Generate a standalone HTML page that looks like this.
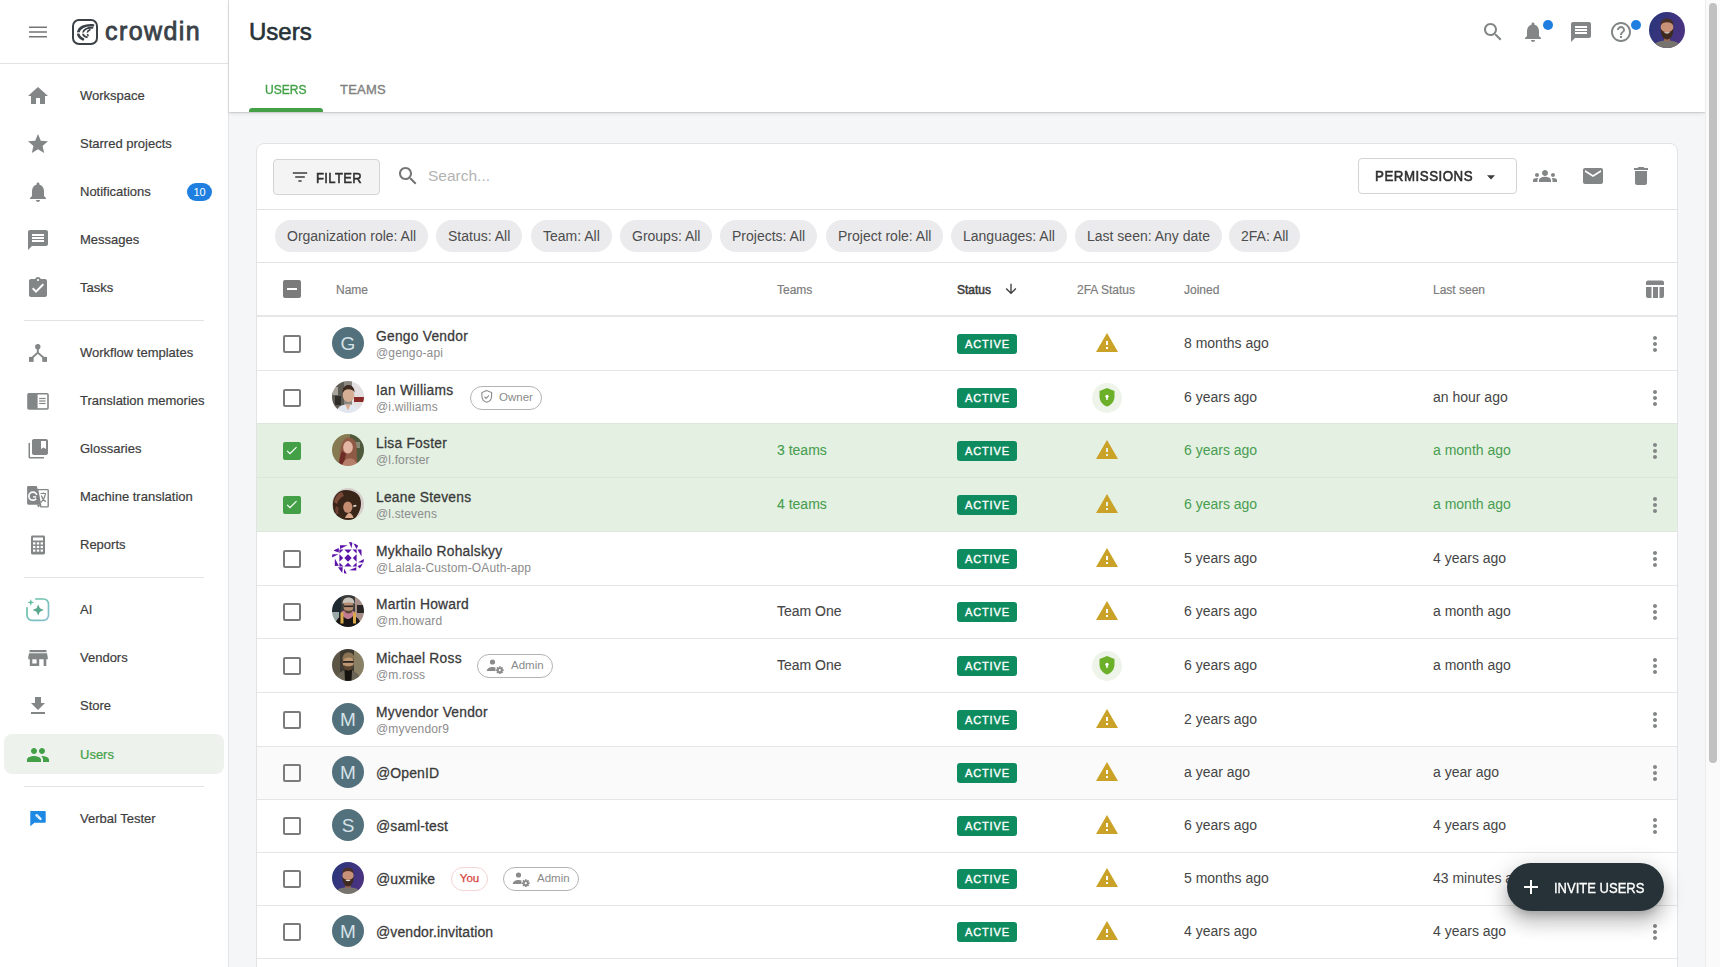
<!DOCTYPE html>
<html><head><meta charset="utf-8">
<style>
*{box-sizing:border-box;margin:0;padding:0}
html,body{width:1720px;height:967px;overflow:hidden}
body{position:relative;background:#f5f6f8;font-family:"Liberation Sans",sans-serif;color:#3c3c3c}
.abs{position:absolute}
svg{display:block}
#side{position:absolute;left:0;top:0;width:229px;height:967px;background:#fff;border-right:1px solid #e3e3e3}
#side .hdr{position:absolute;left:0;top:0;width:228px;height:64px;border-bottom:1px solid #e3e3e3}
.nav{position:absolute;left:4px;width:220px;height:40px;border-radius:8px}
.nav svg{position:absolute;left:22px;top:9px;width:24px;height:24px;fill:#838686}
.nav span{position:absolute;left:76px;top:13px;font-size:13px;line-height:16px;color:#3d3d3d;-webkit-text-stroke:0.2px #3d3d3d;white-space:nowrap}
.nav.act{background:#edf2ec}
.nav.act span{color:#43a047;-webkit-text-stroke:0.2px #43a047}
.nav.act svg{fill:#43a047}
.div{position:absolute;left:24px;width:180px;height:1px;background:#e3e3e3}
.badge{position:absolute;left:183px;top:12px;width:25px;height:18px;border-radius:9px;background:#1e7fe0;color:#fff;font-size:11px;line-height:18px;text-align:center}
#top{position:absolute;left:229px;top:0;width:1476px;height:112px;background:#fff;box-shadow:0 1px 1px rgba(0,0,0,.10),0 2px 4px rgba(0,0,0,.08)}
#sb{position:absolute;left:1705px;top:0;width:15px;height:967px;background:#fafafa;border-left:1px solid #ececec}
#sb i{position:absolute;left:3px;top:3px;width:8px;height:760px;border-radius:4px;background:#c1c1c1}
.ico{position:absolute;width:24px;height:24px;fill:#838686}
.dot{position:absolute;width:10px;height:10px;border-radius:5px;background:#1e7fe0}


#card{position:absolute;left:256px;top:143px;width:1422px;height:860px;background:#fff;border:1px solid #e2e3e4;border-radius:8px;overflow:hidden}
.tb{position:absolute;left:0;top:0;width:100%;height:66px;border-bottom:1px solid #e3e3e3}
.btn{position:absolute;border:1px solid #d4d4d4;border-radius:4px}
.chips{position:absolute;left:0;top:66px;width:100%;height:53px;border-bottom:1px solid #e3e3e3}
.chip{position:absolute;top:10px;height:32px;border-radius:16px;background:#ebebed;font-size:14px;line-height:32px;color:#4d4d4d;padding:0 12px;white-space:nowrap}
.th{position:absolute;left:0;top:119px;width:100%;height:54px;border-bottom:2px solid #e6e6e6}
.th span{position:absolute;top:20px;font-size:12px;line-height:14px;color:#7d7d7d;white-space:nowrap;-webkit-text-stroke:0.2px #7d7d7d}
.row{position:absolute;left:0;width:100%;height:53.42px}
.row.sel{background:#e3f0e2}
.sep{position:absolute;left:0;width:100%;height:1px;background:#e6e6e6}
.row.hov{background:#fafafa}
.cb{position:absolute;left:26px;width:18px;height:18px;border:2px solid #7b7b7b;border-radius:2px}
.cb.on{background:#43a047;border-color:#43a047}
.av svg{filter:blur(0.35px)}
.av{position:absolute;left:75px;width:32px;height:32px;border-radius:50%;overflow:hidden;background:#53717c;color:#d5e2e8;font-size:19px;line-height:34px;text-align:center}
.nm{position:absolute;left:119px;font-size:13.8px;letter-spacing:0.25px;color:#3a3a3a;line-height:16px;white-space:nowrap;-webkit-text-stroke:0.28px #3a3a3a}
.un{position:absolute;left:119px;font-size:12px;letter-spacing:0.15px;color:#8c8c8c;line-height:14px;white-space:nowrap}
.tag{position:absolute;height:24px;border:1px solid #b3b3b3;border-radius:12px;font-size:11.5px;line-height:20.5px;color:#8a8a8a;white-space:nowrap}
.txt{position:absolute;font-size:14px;line-height:16px;color:#454545;white-space:nowrap}
.sel .txt{color:#489d50}
.tm{-webkit-text-stroke:0.1px currentColor}
.stb{position:absolute;left:700px;width:60px;height:20px;border-radius:3px;background:#0f8c5f;color:#fff;font-size:11px;line-height:20px;text-align:center;letter-spacing:0.9px;padding-left:1px;-webkit-text-stroke:0.35px #fff}
.mv{position:absolute;left:1386px;width:24px;height:24px;fill:#838686}
.w2{position:absolute;left:838px;width:24px;height:24px}
#fab{position:absolute;left:1507px;top:863px;width:157px;height:48px;border-radius:24px;background:#263238;box-shadow:0 7px 8px -4px rgba(0,0,0,.2),0 12px 17px 2px rgba(0,0,0,.14),0 5px 22px 4px rgba(0,0,0,.12)}

</style></head><body>

<div id="side">
  <div class="hdr">
    <svg class="abs" style="left:26px;top:20px" width="24" height="24" viewBox="0 0 24 24"><path fill="#757575" d="M3 17.5h18v-1.6H3v1.6zm0-4.7h18v-1.6H3v1.6zM3 6.5v1.6h18V6.5H3z"/></svg>
    <div class="abs" style="left:72px;top:19px;width:26px;height:26px;border:2px solid #3a4147;border-radius:7px"></div>
    <svg class="abs" style="left:68px;top:15px" width="34" height="34" viewBox="0 0 34 34"><g fill="none" stroke="#3a4147" stroke-linecap="round"><path stroke-width="2.6" d="M25 10.3C17 9.6 11 12.5 10.2 17.5C10 20.5 12 23 15 24.3"/><path stroke-width="1.9" d="M24.5 12.8C20 12.5 15.8 14.2 15 17.6C14.8 19.8 16.2 21.4 18.8 22.2"/><path stroke-width="1.6" d="M22 14.8C20.5 15.4 19.6 16.4 19.3 17.6"/><path stroke-width="1.6" d="M19.6 19.2L20 20.6"/></g><path stroke="#fff" stroke-width="1.3" d="M8 17.9L23 18.3"/></svg>
    <div class="abs" style="left:105px;top:16px;font-size:25px;color:#3a4147;line-height:30px;letter-spacing:1.4px;-webkit-text-stroke:0.8px #3a4147">crowdin</div>
  </div>

  <div class="nav" style="top:75px"><svg viewBox="0 0 24 24"><path d="M10 20v-6h4v6h5v-8h3L12 3 2 12h3v8z"/></svg><span>Workspace</span></div>
  <div class="nav" style="top:123px"><svg viewBox="0 0 24 24"><path d="M12 17.27L18.18 21l-1.64-7.03L22 9.24l-7.19-.61L12 2 9.19 8.63 2 9.24l5.46 4.73L5.82 21z"/></svg><span>Starred projects</span></div>
  <div class="nav" style="top:171px"><svg viewBox="0 0 24 24"><path d="M12 22c1.1 0 2-.9 2-2h-4c0 1.1.89 2 2 2zm6-6v-5c0-3.07-1.64-5.64-4.5-6.32V4c0-.83-.67-1.5-1.5-1.5s-1.5.67-1.5 1.5v.68C7.63 5.36 6 7.92 6 11v5l-2 2v1h16v-1l-2-2z"/></svg><span>Notifications</span><div class="badge">10</div></div>
  <div class="nav" style="top:219px"><svg viewBox="0 0 24 24"><path d="M20 2H4c-1.1 0-1.99.9-1.99 2L2 22l4-4h14c1.1 0 2-.9 2-2V4c0-1.1-.9-2-2-2zm-2 12H6v-2h12v2zm0-3H6V9h12v2zm0-3H6V6h12v2z"/></svg><span>Messages</span></div>
  <div class="nav" style="top:267px"><svg viewBox="0 0 24 24"><path d="M19 3h-4.18C14.4 1.84 13.3 1 12 1c-1.3 0-2.4.84-2.82 2H5c-1.1 0-2 .9-2 2v14c0 1.1.9 2 2 2h14c1.1 0 2-.9 2-2V5c0-1.1-.9-2-2-2zm-7 0c.55 0 1 .45 1 1s-.45 1-1 1-1-.45-1-1 .45-1 1-1zm-2 14l-4-4 1.41-1.41L10 14.17l6.59-6.59L18 9l-8 8z"/></svg><span>Tasks</span></div>
  <div class="div" style="top:320px"></div>
  <div class="nav" style="top:332px"><svg viewBox="0 0 24 24"><circle cx="11.8" cy="5.7" r="2.7"/><rect x="3" y="15.9" width="4.6" height="5"/><rect x="16.3" y="15.9" width="4.7" height="5"/><path d="M11.8 8v3.6L5.3 17.5M11.8 11.6l6.7 5.9" fill="none" stroke="#838686" stroke-width="1.9"/></svg><span>Workflow templates</span></div>
  <div class="nav" style="top:380px"><svg viewBox="0 0 24 24"><path d="M3 3.9h18a1.8 1.8 0 0 1 1.8 1.8v13.3a1.8 1.8 0 0 1-1.8 1.8H3a1.8 1.8 0 0 1-1.8-1.8V5.7A1.8 1.8 0 0 1 3 3.9z"/><rect x="11.6" y="5.5" width="9.6" height="13.7" fill="#fff"/><rect x="13.2" y="8.9" width="6.4" height="1.2"/><rect x="13.2" y="11.4" width="6.4" height="1.2"/><rect x="13.2" y="13.9" width="6.4" height="1.2"/></svg><span>Translation memories</span></div>
  <div class="nav" style="top:428px"><svg viewBox="0 0 24 24"><path d="M4 6H2.5v14c0 .8.7 1.5 1.5 1.5h14V20H4V6zm16-4H8c-1.1 0-2 .9-2 2v12c0 1.1.9 2 2 2h12c1.1 0 2-.9 2-2V4c0-1.1-.9-2-2-2zm0 10l-2.5-1.5L15 12V4h5v8z"/></svg><span>Glossaries</span></div>
  <div class="nav" style="top:476px"><svg viewBox="0 0 24 24"><path d="M2.3 1.1h7.6c.7 0 1.1.5 1.3 1.1l4.5 17.5H2.3c-.7 0-1.2-.5-1.2-1.2V2.3c0-.7.5-1.2 1.2-1.2z"/><path d="M11.6 4.6h9.9c.5 0 .7.3.7.7v15.9c0 .5-.3.7-.7.7h-6.6z" fill="#fff" stroke="#838686" stroke-width="1.4"/><path d="M11 19.7h4l-2.8 2.8z"/><circle cx="6.9" cy="11.2" r="4" fill="none" stroke="#fff" stroke-width="1.7"/><path d="M7 11.2h4v1.4H7z" fill="#fff"/><rect x="10.2" y="10" width="2" height="4" fill="#7b7b7b"/><path d="M14.5 8.5h5.5M17.2 7.4v1.2M15.3 10.5c1 3 2.5 5 4.6 6.1M19.4 9c-.8 4-2.3 6.5-4.6 8.5" fill="none" stroke="#838686" stroke-width="1.2"/></svg><span>Machine translation</span></div>
  <div class="nav" style="top:524px"><svg viewBox="0 0 24 24"><path d="M6.5 2.5h11c.9 0 1.5.7 1.5 1.5v16c0 .8-.6 1.5-1.5 1.5h-11c-.9 0-1.5-.7-1.5-1.5V4c0-.8.6-1.5 1.5-1.5z"/><g fill="#fff"><rect x="7" y="4.5" width="10" height="3"/><rect x="7" y="9.3" width="2.4" height="2.2"/><rect x="10.8" y="9.3" width="2.4" height="2.2"/><rect x="14.6" y="9.3" width="2.4" height="2.2"/><rect x="7" y="12.9" width="2.4" height="2.2"/><rect x="10.8" y="12.9" width="2.4" height="2.2"/><rect x="14.6" y="12.9" width="2.4" height="2.2"/><rect x="7" y="16.5" width="2.4" height="2.2"/><rect x="10.8" y="16.5" width="2.4" height="2.2"/><rect x="14.6" y="16.5" width="2.4" height="2.2"/></g></svg><span>Reports</span></div>
  <div class="div" style="top:577px"></div>
  <div class="nav" style="top:589px"><svg viewBox="0 0 24 24"><defs><linearGradient id="aig" x1="0" y1="0" x2="1" y2="1"><stop offset="0" stop-color="#5cc39f"/><stop offset="1" stop-color="#8cbfd0"/></linearGradient></defs><path d="M9.2 1h8.3a5 5 0 0 1 5 5v11.3a5 5 0 0 1-5 5H6a5 5 0 0 1-5-5V9.3" fill="none" stroke="url(#aig)" stroke-width="1.7"/><path d="M4.8 1l.9 2.5 2.6.9-2.6.9-.9 2.6-.9-2.6-2.6-.9 2.6-.9z" fill="#62c09f"/><path d="M12.2 6.4l1.7 3.9 3.9 1.7-3.9 1.7-1.7 3.9-1.7-3.9-3.9-1.7 3.9-1.7z" fill="#5aa88e"/></svg><span>AI</span></div>
  <div class="nav" style="top:637px"><svg viewBox="0 0 24 24"><path d="M3.5 4h17v2.2h-17zM3 7.3h18l.8 4.2v1.8H20.3V20H17.6v-6.7h-4.4V20H3.8v-6.7H2.2v-1.8z"/><rect x="6.3" y="13.3" width="4.3" height="4.2" fill="#fff"/></svg><span>Vendors</span></div>
  <div class="nav" style="top:685px"><svg viewBox="0 0 24 24"><path d="M19 9h-4V3H9v6H5l7 7 7-7zM5 18v2h14v-2H5z"/></svg><span>Store</span></div>
  <div class="nav act" style="top:734px"><svg viewBox="0 0 24 24"><path d="M16 11c1.66 0 2.99-1.34 2.99-3S17.66 5 16 5c-1.66 0-3 1.34-3 3s1.34 3 3 3zm-8 0c1.66 0 2.99-1.34 2.99-3S9.66 5 8 5C6.34 5 5 6.34 5 8s1.34 3 3 3zm0 2c-2.33 0-7 1.17-7 3.5V19h14v-2.5c0-2.33-4.67-3.5-7-3.5zm8 0c-.29 0-.62.02-.97.05 1.16.84 1.97 1.97 1.97 3.45V19h6v-2.5c0-2.33-4.67-3.5-7-3.5z"/></svg><span>Users</span></div>
  <div class="div" style="top:786px"></div>
  <div class="nav" style="top:798px"><svg viewBox="0 0 24 24"><path d="M4.8 4.1h14.2c.4 0 .7.3.7.7v10.2c0 .4-.3.7-.7.7H8.4l-4.1 3.6V4.8c0-.4.2-.7.5-.7z" fill="#1e88e5"/><path d="M10.6 8.3L14.4 11.9" stroke="#e8f3fc" stroke-width="2.6" stroke-linecap="round"/><path d="M11.2 8.9L11.9 9.5" stroke="#1e88e5" stroke-width="0.7"/></svg><span>Verbal Tester</span></div>
</div>

<div id="top">
  <div class="abs" style="left:20px;top:18px;font-size:24px;line-height:28px;color:#263238;-webkit-text-stroke:0.6px #263238">Users</div>
  <div class="abs" style="left:36px;top:83px;font-size:12.5px;line-height:14px;color:#43a047;letter-spacing:0px;-webkit-text-stroke:0.35px #43a047;transform:scaleX(0.965);transform-origin:0 0">USERS</div>
  <div class="abs" style="left:111px;top:83px;font-size:13px;line-height:14px;color:#808080;letter-spacing:0.2px;-webkit-text-stroke:0.35px #808080">TEAMS</div>
  <div class="abs" style="left:20px;top:108px;width:74px;height:4px;background:#43a047;border-radius:3px 3px 0 0"></div>
  <svg class="ico" style="left:1252px;top:20px" viewBox="0 0 24 24"><path d="M15.5 14h-.79l-.28-.27C15.41 12.59 16 11.11 16 9.5 16 5.91 13.09 3 9.5 3S3 5.91 3 9.5 5.91 16 9.5 16c1.61 0 3.09-.59 4.230-1.57l.27.28v.79l5 4.99L20.490 19l-4.99-5zm-6 0C7.01 14 5 11.99 5 9.5S7.01 5 9.5 5 14 7.01 14 9.5 11.99 14 9.5 14z"/></svg>
  <svg class="ico" style="left:1292px;top:20px" viewBox="0 0 24 24"><path d="M12 22c1.1 0 2-.9 2-2h-4c0 1.1.89 2 2 2zm6-6v-5c0-3.07-1.64-5.640-4.5-6.32V4c0-.83-.67-1.5-1.5-1.5s-1.5.67-1.5 1.5v.68C7.63 5.36 6 7.92 6 11v5l-2 2v1h16v-1l-2-2z"/></svg>
  <div class="dot" style="left:1314px;top:20px"></div>
  <svg class="ico" style="left:1340px;top:20px" viewBox="0 0 24 24"><path d="M20 2H4c-1.1 0-1.99.9-1.99 2L2 22l4-4h14c1.1 0 2-.9 2-2V4c0-1.1-.9-2-2-2zm-2 12H6v-2h12v2zm0-3H6V9h12v2zm0-3H6V6h12v2z"/></svg>
  <svg class="ico" style="left:1380px;top:20px" viewBox="0 0 24 24"><path d="M11 18h2v-2h-2v2zm1-16C6.48 2 2 6.48 2 12s4.48 10 10 10 10-4.48 10-10S17.52 2 12 2zm0 18c-4.41 0-8-3.59-8-8s3.59-8 8-8 8 3.59 8 8-3.59 8-8 8zm0-14c-2.21 0-4 1.79-4 4h2c0-1.1.9-2 2-2s2 .9 2 2c0 2-3 1.75-3 5h2c0-2.25 3-2.5 3-5 0-2.210-1.79-4-4-4z"/></svg>
  <div class="dot" style="left:1402px;top:20px"></div>
  <svg class="abs" style="left:1420px;top:12px" width="36" height="36" viewBox="0 0 36 36"><defs><linearGradient id="mk" x1="0" y1="0" x2="1" y2="0.4"><stop offset="0" stop-color="#26367a"/><stop offset="1" stop-color="#4a3381"/></linearGradient><clipPath id="mkc"><circle cx="18" cy="18" r="18"/></clipPath></defs><g clip-path="url(#mkc)"><rect width="36" height="36" fill="url(#mk)"/><path d="M2 37C4 31 10 28.5 18 28.5S32 31 34 37z" fill="#77736e"/><rect x="15" y="22" width="6" height="7" fill="#9a6a55"/><ellipse cx="18" cy="15.5" rx="6.3" ry="7.6" fill="#c99278"/><path d="M11.6 13.5C11.4 8.5 14 6.5 18 6.5S24.6 8.5 24.4 13.5C23 11 21 10.2 18 10.2S13 11 11.6 13.5z" fill="#4a3028"/><path d="M11.6 16C11.6 24 14.5 27.5 18 27.5S24.4 24 24.4 16C23.2 19 21 20.2 18 20.2S12.8 19 11.6 16z" fill="#3f2a21"/><path d="M15 20.3C16 21.3 17 21.6 18 21.6S20 21.3 21 20.3z" fill="#eee4de"/></g></svg>
</div>

<div id="card">
  <div class="tb">
    <div class="btn" style="left:16px;top:15px;width:107px;height:36px;background:#f4f4f4">
      <svg class="abs" style="left:13.5px;top:5px" width="24" height="24" viewBox="0 0 24 24"><path fill="#3c3c3c" d="M10 18h4v-2h-4v2zM3 6v2h18V6H3zm3 7h12v-2H6v2z" transform="translate(2.4,2.4) scale(0.8)"/></svg>
      <div class="abs" style="left:42px;top:10px;font-size:14px;color:#2f2f2f;letter-spacing:0.4px;line-height:16px;-webkit-text-stroke:0.55px #2f2f2f;transform:scaleX(0.93);transform-origin:0 0">FILTER</div>
    </div>
    <svg class="abs" style="left:139px;top:20px" width="24" height="24" viewBox="0 0 24 24"><path fill="#757575" d="M15.5 14h-.79l-.28-.27C15.41 12.59 16 11.11 16 9.5 16 5.91 13.09 3 9.5 3S3 5.91 3 9.5 5.91 16 9.5 16c1.61 0 3.09-.59 4.23-1.57l.27.28v.79l5 4.99L20.49 19l-4.99-5zm-6 0C7.01 14 5 11.99 5 9.5S7.01 5 9.5 5 14 7.01 14 9.5 11.99 14 9.5 14z"/></svg>
    <div class="abs" style="left:171px;top:23px;font-size:15.5px;color:#b3b3b3;line-height:18px">Search...</div>
    <div class="btn" style="left:1101px;top:14px;width:159px;height:36px;background:#fff">
      <div class="abs" style="left:16px;top:9px;font-size:14px;color:#2f2f2f;letter-spacing:0.55px;line-height:16px;-webkit-text-stroke:0.55px #2f2f2f;transform:scaleX(0.95);transform-origin:0 0">PERMISSIONS</div>
      <svg class="abs" style="left:120px;top:6px" width="24" height="24" viewBox="0 0 24 24"><path fill="#3c3c3c" d="M8 10.2l4 4.3 4-4.3z"/></svg>
    </div>
    <svg class="abs" style="left:1276px;top:20px" width="24" height="24" viewBox="0 0 24 24"><path fill="#838686" d="M12 12.75c1.63 0 3.07.39 4.24.9 1.08.48 1.76 1.56 1.76 2.73V18H6v-1.61c0-1.18.68-2.26 1.76-2.73 1.17-.52 2.61-.91 4.24-.91zM4 13c1.1 0 2-.9 2-2s-.9-2-2-2-2 .9-2 2 .9 2 2 2zm1.130 1.1c-.37-.06-.74-.1-1.13-.1-.99 0-1.93.21-2.78.58C.48 14.9 0 15.62 0 16.43V18h4.5v-1.61c0-.83.23-1.61.63-2.29zM20 13c1.1 0 2-.9 2-2s-.9-2-2-2-2 .9-2 2 .9 2 2 2zm4 3.43c0-.81-.48-1.53-1.22-1.85-.85-.37-1.79-.58-2.78-.58-.39 0-.76.04-1.13.1.4.68.63 1.46.63 2.29V18H24v-1.57zM12 6c1.66 0 3 1.34 3 3s-1.34 3-3 3-3-1.34-3-3 1.34-3 3-3z"/></svg>
    <svg class="abs" style="left:1324px;top:20px" width="24" height="24" viewBox="0 0 24 24"><path fill="#838686" d="M20 4H4c-1.1 0-1.99.9-1.99 2L2 18c0 1.1.9 2 2 2h16c1.1 0 2-.9 2-2V6c0-1.1-.9-2-2-2zm0 4l-8 5-8-5V6l8 5 8-5v2z"/></svg>
    <svg class="abs" style="left:1372px;top:20px" width="24" height="24" viewBox="0 0 24 24"><path fill="#838686" d="M6 19c0 1.1.9 2 2 2h8c1.1 0 2-.9 2-2V7H6v12zM19 4h-3.5l-1-1h-5l-1 1H5v2h14V4z"/></svg>
  </div>
  <div class="chips">
    <div class="chip" style="left:18px">Organization role: All</div>
    <div class="chip" style="left:179px">Status: All</div>
    <div class="chip" style="left:274px">Team: All</div>
    <div class="chip" style="left:363px">Groups: All</div>
    <div class="chip" style="left:463px">Projects: All</div>
    <div class="chip" style="left:569px">Project role: All</div>
    <div class="chip" style="left:694px">Languages: All</div>
    <div class="chip" style="left:818px">Last seen: Any date</div>
    <div class="chip" style="left:972px">2FA: All</div>
  </div>
  <div class="th">
    <div class="cb" style="top:17px;background:#7b7b7b;border-color:#7b7b7b"><div class="abs" style="left:2px;top:6px;width:10px;height:2px;background:#fff"></div></div>
    <span style="left:79px">Name</span>
    <span style="left:520px">Teams</span>
    <span style="left:700px;color:#3c3c3c;-webkit-text-stroke:0.5px #3c3c3c">Status</span>
    <svg class="abs" style="left:746px;top:18px" width="16" height="16" viewBox="0 0 24 24"><path fill="#3c3c3c" d="M20 12l-1.41-1.41L13 16.17V4h-2v12.17l-5.58-5.59L4 12l8 8 8-8z"/></svg>
    <span style="left:820px">2FA Status</span>
    <span style="left:927px">Joined</span>
    <span style="left:1176px">Last seen</span>
    <svg class="abs" style="left:1388px;top:17px" width="20" height="20" viewBox="0 0 20 20"><path fill="#838686" d="M1 2.6a2 2 0 0 1 2-2h14a2 2 0 0 1 2 2V5H1zM1 7h5.5v11H3a2 2 0 0 1-2-2zM8 7h5v11H8zM14.5 7H19v9a2 2 0 0 1-2 2h-2.5z"/></svg>
  </div>
  <div class="row" style="top:173px;height:54px"><div class="cb" style="top:18.00px"></div><div class="av" style="top:10.00px">G</div><div class="nm" style="top:11.50px">Gengo Vendor</div><div class="un" style="top:29.00px">@gengo-api</div><div class="stb" style="top:17.00px">ACTIVE</div><svg class="w2" style="top:14.00px" viewBox="0 0 24 24"><path fill="#c9a227" d="M1 21h22L12 2 1 21zm12-3h-2v-2h2v2zm0-4h-2v-4h2v4z"/></svg><div class="txt" style="left:927px;top:18.30px">8 months ago</div><svg class="mv" style="top:15.00px" viewBox="0 0 24 24"><path d="M12 8c1.1 0 2-.9 2-2s-.9-2-2-2-2 .9-2 2 .9 2 2 2zm0 2c-1.1 0-2 .9-2 2s.9 2 2 2 2-.9 2-2-.9-2-2-2zm0 6c-1.1 0-2 .9-2 2s.9 2 2 2 2-.9 2-2-.9-2-2-2z"/></svg></div><div class="row" style="top:227px;height:53px"><div class="cb" style="top:18.00px"></div><div class="av" style="top:10.00px;background:none"><svg width="32" height="32" viewBox="0 0 32 32" style="position:absolute;left:0;top:0"><rect width="32" height="32" fill="#8a8680"/><rect x="0" y="0" width="12" height="32" fill="#5e5a54"/><rect x="1" y="6" width="5" height="8" fill="#a8a49c"/><rect x="3" y="15" width="6" height="9" fill="#2e2c28"/><rect x="20" y="0" width="12" height="32" fill="#e4e0e2"/><rect x="22" y="16" width="10" height="5" fill="#8a2a26"/><path d="M4 32c1-6 5-8.5 12-8.5s11 2.5 12 8.5z" fill="#e2e6ee"/><path d="M13.5 23.5l2.5 6 2.5-6z" fill="#d8aa90"/><ellipse cx="16.5" cy="14" rx="5.8" ry="7" fill="#d6ae94"/><path d="M10.5 12c-.2-5.5 2.8-8 6-8s6.2 2.5 6 7.5c-1.2-2-3-3.2-6-3.2s-4.8 1.5-6 3.7z" fill="#3d2a20"/></svg></div><div class="nm" style="top:11.50px">Ian Williams</div><div class="un" style="top:29.00px">@i.williams</div><div class="tag" style="left:213px;top:14.50px;width:72px;padding-left:28px"><svg class="abs" style="left:7.5px;top:2.6px" width="15.5" height="15.5" viewBox="0 0 24 24"><path fill="none" stroke="#8a8a8a" stroke-width="1.7" d="M12 2.5L4.5 5.5v5.3c0 4.4 3.1 8.5 7.5 9.7 4.4-1.2 7.5-5.3 7.5-9.7V5.5z"/><path fill="none" stroke="#8a8a8a" stroke-width="1.7" d="M8.5 12l2.5 2.5 4.5-4.5"/></svg>Owner</div><div class="stb" style="top:17.00px">ACTIVE</div><div class="abs" style="left:835px;top:12.00px;width:30px;height:30px;border-radius:50%;background:#eef4ea"></div><svg class="w2" style="top:15.00px" viewBox="0 0 24 24"><path fill="#6cb02a" d="M12 2L4.5 5v5.6c0 4.6 3.2 8.9 7.5 10 4.3-1.1 7.5-5.4 7.5-10V5z"/><circle cx="12" cy="10.3" r="1.6" fill="#fff"/><rect x="11.2" y="10.5" width="1.6" height="3.3" fill="#fff"/></svg><div class="txt" style="left:927px;top:18.30px">6 years ago</div><div class="txt" style="left:1176px;top:18.30px">an hour ago</div><svg class="mv" style="top:15.00px" viewBox="0 0 24 24"><path d="M12 8c1.1 0 2-.9 2-2s-.9-2-2-2-2 .9-2 2 .9 2 2 2zm0 2c-1.1 0-2 .9-2 2s.9 2 2 2 2-.9 2-2-.9-2-2-2zm0 6c-1.1 0-2 .9-2 2s.9 2 2 2 2-.9 2-2-.9-2-2-2z"/></svg></div><div class="row sel" style="top:280px;height:54px"><div class="cb on" style="top:18.00px"><svg width="14" height="14" viewBox="0 0 24 24" style="position:absolute;left:0;top:0"><path fill="#fff" d="M9 16.2L4.8 12l-1.4 1.4L9 19 21 7l-1.4-1.4L9 16.2z" transform="translate(-0.5,-1)"/></svg></div><div class="av" style="top:10.00px;background:none"><svg width="32" height="32" viewBox="0 0 32 32" style="position:absolute;left:0;top:0"><rect width="32" height="32" fill="#857a52"/><rect x="0" y="0" width="14" height="32" fill="#857a52"/><rect x="18" y="0" width="14" height="32" fill="#4f5a3c"/><rect x="22" y="8" width="6" height="6" fill="#8a8a78"/><path d="M8 32c-1-10 0-18 2-23 2-4 5-5.5 7-5.5 4 0 7 3 7.5 8 .5 6 0 14 1 20.5z" fill="#8e5a46"/><path d="M7 32c0-7 2-12 3-15l4 3c-1 4-2 8-2 12z" fill="#6e2a24"/><ellipse cx="16" cy="13.3" rx="4.8" ry="6.2" fill="#e4b6a4"/><path d="M10 32c1-5 4-7.5 8-7.5s6.5 2.5 7 7.5z" fill="#b57e6a"/></svg></div><div class="nm" style="top:11.50px">Lisa Foster</div><div class="un" style="top:29.00px">@l.forster</div><div class="txt tm" style="left:520px;top:18.30px">3 teams</div><div class="stb" style="top:17.00px">ACTIVE</div><svg class="w2" style="top:14.00px" viewBox="0 0 24 24"><path fill="#c9a227" d="M1 21h22L12 2 1 21zm12-3h-2v-2h2v2zm0-4h-2v-4h2v4z"/></svg><div class="txt" style="left:927px;top:18.30px">6 years ago</div><div class="txt" style="left:1176px;top:18.30px">a month ago</div><svg class="mv" style="top:15.00px" viewBox="0 0 24 24"><path d="M12 8c1.1 0 2-.9 2-2s-.9-2-2-2-2 .9-2 2 .9 2 2 2zm0 2c-1.1 0-2 .9-2 2s.9 2 2 2 2-.9 2-2-.9-2-2-2zm0 6c-1.1 0-2 .9-2 2s.9 2 2 2 2-.9 2-2-.9-2-2-2z"/></svg></div><div class="row sel" style="top:334px;height:54px"><div class="cb on" style="top:18.00px"><svg width="14" height="14" viewBox="0 0 24 24" style="position:absolute;left:0;top:0"><path fill="#fff" d="M9 16.2L4.8 12l-1.4 1.4L9 19 21 7l-1.4-1.4L9 16.2z" transform="translate(-0.5,-1)"/></svg></div><div class="av" style="top:10.00px;background:none"><svg width="32" height="32" viewBox="0 0 32 32" style="position:absolute;left:0;top:0"><rect width="32" height="32" fill="#d6cfcc"/><rect x="0" y="0" width="32" height="32" fill="#d6cfcc"/><path d="M1 18c-1-9 5-16 13-16 9 0 15 5 15 13 0 7-3 13-8 17H7c-4-3-6-8-6-14z" fill="#3a2519"/><path d="M2 14c1-5 4-9 8-10l2 4c-3 1-6 4-7 8z" fill="#7b4a38"/><path d="M4 26c-1-3-1-6 0-8l3 2c-1 2-1 4 0 6z" fill="#6a3e30"/><ellipse cx="15.8" cy="19.2" rx="4.6" ry="5.8" fill="#c48c70"/><path d="M13 30c1-3 3-5 4.5-5s3.5 2 4 5z" fill="#d6a888"/><path d="M21 17.5l3-.8.6 1.5-3 .8z" fill="#e8e2de"/></svg></div><div class="nm" style="top:11.50px">Leane Stevens</div><div class="un" style="top:29.00px">@l.stevens</div><div class="txt tm" style="left:520px;top:18.30px">4 teams</div><div class="stb" style="top:17.00px">ACTIVE</div><svg class="w2" style="top:14.00px" viewBox="0 0 24 24"><path fill="#c9a227" d="M1 21h22L12 2 1 21zm12-3h-2v-2h2v2zm0-4h-2v-4h2v4z"/></svg><div class="txt" style="left:927px;top:18.30px">6 years ago</div><div class="txt" style="left:1176px;top:18.30px">a month ago</div><svg class="mv" style="top:15.00px" viewBox="0 0 24 24"><path d="M12 8c1.1 0 2-.9 2-2s-.9-2-2-2-2 .9-2 2 .9 2 2 2zm0 2c-1.1 0-2 .9-2 2s.9 2 2 2 2-.9 2-2-.9-2-2-2zm0 6c-1.1 0-2 .9-2 2s.9 2 2 2 2-.9 2-2-.9-2-2-2z"/></svg></div><div class="row" style="top:388px;height:54px"><div class="cb" style="top:18.00px"></div><div class="av" style="top:10.00px;background:none"><svg width="32" height="32" viewBox="0 0 32 32" style="position:absolute;left:0;top:0"><rect width="32" height="32" fill="#ffffff"/><g fill="#5a12a8"><polygon points="16,12.3 19.7,16 16,19.7 12.3,16"/><polygon points="12.3,7.4 19.7,7.4 16,11.2"/><polygon points="12.3,24.6 19.7,24.6 16,20.8"/><polygon points="7.4,12.3 7.4,19.7 11.2,16"/><polygon points="24.6,12.3 24.6,19.7 20.8,16"/><polygon points="7.4,7.4 11.5,7.4 7.4,11.5"/><polygon points="24.6,7.4 20.5,7.4 24.6,11.5"/><polygon points="7.4,24.6 11.5,24.6 7.4,20.5"/><polygon points="24.6,24.6 20.5,24.6 24.6,20.5"/><polygon points="17,0 20.5,0 19.5,6.3"/><polygon points="21.5,1.3 26.5,3 24.5,7"/><polygon points="8,3.3 15.5,3.3 8,7"/><polygon points="1,8.5 6.8,6 6.8,10.5"/><polygon points="0,12.3 6.5,12.3 0,15.5"/><polygon points="2.8,16.5 6.8,23.8 2.8,24"/><polygon points="6,25.2 10.8,25.2 10.2,31"/><polygon points="12,26.5 14.8,31.5 12,31.5"/><polygon points="17,28.3 24.3,25.2 24.3,28.5"/><polygon points="25.5,24.3 31,21.5 28,26.5"/><polygon points="26,20.3 32,17 32,20.8"/><polygon points="25.5,7.4 29.5,7.4 29.5,14.5"/></g></svg></div><div class="nm" style="top:11.50px">Mykhailo Rohalskyy</div><div class="un" style="top:29.00px">@Lalala-Custom-OAuth-app</div><div class="stb" style="top:17.00px">ACTIVE</div><svg class="w2" style="top:14.00px" viewBox="0 0 24 24"><path fill="#c9a227" d="M1 21h22L12 2 1 21zm12-3h-2v-2h2v2zm0-4h-2v-4h2v4z"/></svg><div class="txt" style="left:927px;top:18.30px">5 years ago</div><div class="txt" style="left:1176px;top:18.30px">4 years ago</div><svg class="mv" style="top:15.00px" viewBox="0 0 24 24"><path d="M12 8c1.1 0 2-.9 2-2s-.9-2-2-2-2 .9-2 2 .9 2 2 2zm0 2c-1.1 0-2 .9-2 2s.9 2 2 2 2-.9 2-2-.9-2-2-2zm0 6c-1.1 0-2 .9-2 2s.9 2 2 2 2-.9 2-2-.9-2-2-2z"/></svg></div><div class="row" style="top:441px;height:54px"><div class="cb" style="top:18.00px"></div><div class="av" style="top:10.00px;background:none"><svg width="32" height="32" viewBox="0 0 32 32" style="position:absolute;left:0;top:0"><rect width="32" height="32" fill="#3a3a38"/><rect x="0" y="0" width="9" height="32" fill="#1f2a30"/><rect x="0" y="17" width="7" height="10" fill="#9aa8a8"/><rect x="23" y="0" width="9" height="32" fill="#a8908a"/><rect x="25" y="10" width="7" height="8" fill="#2a2626"/><path d="M3 32c0-8 5-12 13-12s13 4 13 12z" fill="#1a1616"/><path d="M9 17c2 5 4.5 7 7 7s5-2 7-7c-2-1.5-4.5-2-7-2s-5 .5-7 2z" fill="#c07a92"/><rect x="8.5" y="17.5" width="3" height="11" fill="#d9aa4a"/><rect x="21" y="17.5" width="3" height="11" fill="#d9aa4a"/><ellipse cx="16.5" cy="11.5" rx="5" ry="6" fill="#b58d73"/><path d="M10.5 9c0-4.5 2.5-6.5 6-6.5s6 2 6 6.5c-1.5-1-3.5-1.5-6-1.5s-4.5.5-6 1.5z" fill="#c9c4bc"/><rect x="11.5" y="10.5" width="10" height="1.6" fill="#2b2622"/><path d="M12 14.5c1 3 2.5 4 4.5 4s3.5-1 4.5-4c-1 1-2.5 1.3-4.5 1.3s-3.5-.3-4.5-1.3z" fill="#5a4434"/></svg></div><div class="nm" style="top:11.50px">Martin Howard</div><div class="un" style="top:29.00px">@m.howard</div><div class="txt tm" style="left:520px;top:18.30px">Team One</div><div class="stb" style="top:17.00px">ACTIVE</div><svg class="w2" style="top:14.00px" viewBox="0 0 24 24"><path fill="#c9a227" d="M1 21h22L12 2 1 21zm12-3h-2v-2h2v2zm0-4h-2v-4h2v4z"/></svg><div class="txt" style="left:927px;top:18.30px">6 years ago</div><div class="txt" style="left:1176px;top:18.30px">a month ago</div><svg class="mv" style="top:15.00px" viewBox="0 0 24 24"><path d="M12 8c1.1 0 2-.9 2-2s-.9-2-2-2-2 .9-2 2 .9 2 2 2zm0 2c-1.1 0-2 .9-2 2s.9 2 2 2 2-.9 2-2-.9-2-2-2zm0 6c-1.1 0-2 .9-2 2s.9 2 2 2 2-.9 2-2-.9-2-2-2z"/></svg></div><div class="row" style="top:495px;height:54px"><div class="cb" style="top:18.00px"></div><div class="av" style="top:10.00px;background:none"><svg width="32" height="32" viewBox="0 0 32 32" style="position:absolute;left:0;top:0"><rect width="32" height="32" fill="#3e3a32"/><rect x="0" y="0" width="32" height="32" fill="#3e3a32"/><rect x="0" y="0" width="8" height="32" fill="#5c5444"/><rect x="22" y="0" width="10" height="32" fill="#8a8066"/><path d="M3 32c1-7 6-11 13-11s12 4 13 11z" fill="#6a6456"/><path d="M12.5 21h7.5l-.5 11h-6.5z" fill="#15120f"/><ellipse cx="16.3" cy="13.5" rx="5.6" ry="6.8" fill="#bd9672"/><path d="M10.5 11.5c-.5-5.5 2.5-8 6-8s6.5 2.5 6 7.5c-2-2-4-2.5-6-2.5s-4 1-6 3z" fill="#8a7352"/><rect x="10.8" y="12" width="11" height="1.8" fill="#2a2520"/><path d="M11 15.5c1 4.5 3 6 5.3 6s4.3-1.5 5.3-6c-1 1.2-3 1.8-5.3 1.8s-4.3-.6-5.3-1.8z" fill="#5a4630"/></svg></div><div class="nm" style="top:11.50px">Michael Ross</div><div class="un" style="top:29.00px">@m.ross</div><div class="tag" style="left:220px;top:14.50px;width:76px;padding-left:33px"><svg class="abs" style="left:8px;top:3px" width="19" height="16" viewBox="0 0 19 16"><circle cx="6.5" cy="4" r="2.6" fill="#8a8a8a"/><path d="M0.8 12.9c0-2.7 3.2-4 5.7-4 1.2 0 2.2.2 3 .5v3.5z" fill="#8a8a8a"/><g transform="translate(13.8,12.2)" fill="#8a8a8a"><circle r="2.7"/><rect x="-0.9" y="-3.9" width="1.8" height="2" transform="rotate(0)"/><rect x="-0.9" y="-3.9" width="1.8" height="2" transform="rotate(45)"/><rect x="-0.9" y="-3.9" width="1.8" height="2" transform="rotate(90)"/><rect x="-0.9" y="-3.9" width="1.8" height="2" transform="rotate(135)"/><rect x="-0.9" y="-3.9" width="1.8" height="2" transform="rotate(180)"/><rect x="-0.9" y="-3.9" width="1.8" height="2" transform="rotate(225)"/><rect x="-0.9" y="-3.9" width="1.8" height="2" transform="rotate(270)"/><rect x="-0.9" y="-3.9" width="1.8" height="2" transform="rotate(315)"/><circle r="1.1" fill="#fff"/></g></svg>Admin</div><div class="txt tm" style="left:520px;top:18.30px">Team One</div><div class="stb" style="top:17.00px">ACTIVE</div><div class="abs" style="left:835px;top:12.00px;width:30px;height:30px;border-radius:50%;background:#eef4ea"></div><svg class="w2" style="top:15.00px" viewBox="0 0 24 24"><path fill="#6cb02a" d="M12 2L4.5 5v5.6c0 4.6 3.2 8.9 7.5 10 4.3-1.1 7.5-5.4 7.5-10V5z"/><circle cx="12" cy="10.3" r="1.6" fill="#fff"/><rect x="11.2" y="10.5" width="1.6" height="3.3" fill="#fff"/></svg><div class="txt" style="left:927px;top:18.30px">6 years ago</div><div class="txt" style="left:1176px;top:18.30px">a month ago</div><svg class="mv" style="top:15.00px" viewBox="0 0 24 24"><path d="M12 8c1.1 0 2-.9 2-2s-.9-2-2-2-2 .9-2 2 .9 2 2 2zm0 2c-1.1 0-2 .9-2 2s.9 2 2 2 2-.9 2-2-.9-2-2-2zm0 6c-1.1 0-2 .9-2 2s.9 2 2 2 2-.9 2-2-.9-2-2-2z"/></svg></div><div class="row" style="top:549px;height:54px"><div class="cb" style="top:18.00px"></div><div class="av" style="top:10.00px">M</div><div class="nm" style="top:11.50px">Myvendor Vendor</div><div class="un" style="top:29.00px">@myvendor9</div><div class="stb" style="top:17.00px">ACTIVE</div><svg class="w2" style="top:14.00px" viewBox="0 0 24 24"><path fill="#c9a227" d="M1 21h22L12 2 1 21zm12-3h-2v-2h2v2zm0-4h-2v-4h2v4z"/></svg><div class="txt" style="left:927px;top:18.30px">2 years ago</div><svg class="mv" style="top:15.00px" viewBox="0 0 24 24"><path d="M12 8c1.1 0 2-.9 2-2s-.9-2-2-2-2 .9-2 2 .9 2 2 2zm0 2c-1.1 0-2 .9-2 2s.9 2 2 2 2-.9 2-2-.9-2-2-2zm0 6c-1.1 0-2 .9-2 2s.9 2 2 2 2-.9 2-2-.9-2-2-2z"/></svg></div><div class="row hov" style="top:602px;height:54px"><div class="cb" style="top:18.00px"></div><div class="av" style="top:10.00px">M</div><div class="nm" style="top:19.20px;font-size:14px;letter-spacing:0.1px">@OpenID</div><div class="stb" style="top:17.00px">ACTIVE</div><svg class="w2" style="top:14.00px" viewBox="0 0 24 24"><path fill="#c9a227" d="M1 21h22L12 2 1 21zm12-3h-2v-2h2v2zm0-4h-2v-4h2v4z"/></svg><div class="txt" style="left:927px;top:18.30px">a year ago</div><div class="txt" style="left:1176px;top:18.30px">a year ago</div><svg class="mv" style="top:15.00px" viewBox="0 0 24 24"><path d="M12 8c1.1 0 2-.9 2-2s-.9-2-2-2-2 .9-2 2 .9 2 2 2zm0 2c-1.1 0-2 .9-2 2s.9 2 2 2 2-.9 2-2-.9-2-2-2zm0 6c-1.1 0-2 .9-2 2s.9 2 2 2 2-.9 2-2-.9-2-2-2z"/></svg></div><div class="row" style="top:655px;height:54px"><div class="cb" style="top:18.00px"></div><div class="av" style="top:10.00px">S</div><div class="nm" style="top:19.20px;font-size:14px;letter-spacing:0.1px">@saml-test</div><div class="stb" style="top:17.00px">ACTIVE</div><svg class="w2" style="top:14.00px" viewBox="0 0 24 24"><path fill="#c9a227" d="M1 21h22L12 2 1 21zm12-3h-2v-2h2v2zm0-4h-2v-4h2v4z"/></svg><div class="txt" style="left:927px;top:18.30px">6 years ago</div><div class="txt" style="left:1176px;top:18.30px">4 years ago</div><svg class="mv" style="top:15.00px" viewBox="0 0 24 24"><path d="M12 8c1.1 0 2-.9 2-2s-.9-2-2-2-2 .9-2 2 .9 2 2 2zm0 2c-1.1 0-2 .9-2 2s.9 2 2 2 2-.9 2-2-.9-2-2-2zm0 6c-1.1 0-2 .9-2 2s.9 2 2 2 2-.9 2-2-.9-2-2-2z"/></svg></div><div class="row" style="top:708px;height:54px"><div class="cb" style="top:18.00px"></div><div class="av" style="top:10.00px;background:none"><svg width="32" height="32" viewBox="0 0 36 36" style="position:absolute;left:0;top:0"><defs><linearGradient id="mk2" x1="0" y1="0" x2="1" y2="0.4"><stop offset="0" stop-color="#26367a"/><stop offset="1" stop-color="#4a3381"/></linearGradient></defs><rect width="36" height="36" fill="url(#mk2)"/><path d="M2 37C4 31 10 28.5 18 28.5S32 31 34 37z" fill="#77736e"/><rect x="15" y="22" width="6" height="7" fill="#9a6a55"/><ellipse cx="18" cy="15.5" rx="6.3" ry="7.6" fill="#c99278"/><path d="M11.6 13.5C11.4 8.5 14 6.5 18 6.5S24.6 8.5 24.4 13.5C23 11 21 10.2 18 10.2S13 11 11.6 13.5z" fill="#4a3028"/><path d="M11.6 16C11.6 24 14.5 27.5 18 27.5S24.4 24 24.4 16C23.2 19 21 20.2 18 20.2S12.8 19 11.6 16z" fill="#3f2a21"/><path d="M15 20.3C16 21.3 17 21.6 18 21.6S20 21.3 21 20.3z" fill="#eee4de"/></svg></div><div class="nm" style="top:19.20px;font-size:14px;letter-spacing:0.1px">@uxmike</div><div class="tag" style="left:194px;top:14.50px;width:37px;text-align:center;border-color:#f3d3d3;color:#d2443a;-webkit-text-stroke:0.25px #d2443a">You</div><div class="tag" style="left:246px;top:14.50px;width:76px;padding-left:33px"><svg class="abs" style="left:8px;top:3px" width="19" height="16" viewBox="0 0 19 16"><circle cx="6.5" cy="4" r="2.6" fill="#8a8a8a"/><path d="M0.8 12.9c0-2.7 3.2-4 5.7-4 1.2 0 2.2.2 3 .5v3.5z" fill="#8a8a8a"/><g transform="translate(13.8,12.2)" fill="#8a8a8a"><circle r="2.7"/><rect x="-0.9" y="-3.9" width="1.8" height="2" transform="rotate(0)"/><rect x="-0.9" y="-3.9" width="1.8" height="2" transform="rotate(45)"/><rect x="-0.9" y="-3.9" width="1.8" height="2" transform="rotate(90)"/><rect x="-0.9" y="-3.9" width="1.8" height="2" transform="rotate(135)"/><rect x="-0.9" y="-3.9" width="1.8" height="2" transform="rotate(180)"/><rect x="-0.9" y="-3.9" width="1.8" height="2" transform="rotate(225)"/><rect x="-0.9" y="-3.9" width="1.8" height="2" transform="rotate(270)"/><rect x="-0.9" y="-3.9" width="1.8" height="2" transform="rotate(315)"/><circle r="1.1" fill="#fff"/></g></svg>Admin</div><div class="stb" style="top:17.00px">ACTIVE</div><svg class="w2" style="top:14.00px" viewBox="0 0 24 24"><path fill="#c9a227" d="M1 21h22L12 2 1 21zm12-3h-2v-2h2v2zm0-4h-2v-4h2v4z"/></svg><div class="txt" style="left:927px;top:18.30px">5 months ago</div><div class="txt" style="left:1176px;top:18.30px">43 minutes ago</div><svg class="mv" style="top:15.00px" viewBox="0 0 24 24"><path d="M12 8c1.1 0 2-.9 2-2s-.9-2-2-2-2 .9-2 2 .9 2 2 2zm0 2c-1.1 0-2 .9-2 2s.9 2 2 2 2-.9 2-2-.9-2-2-2zm0 6c-1.1 0-2 .9-2 2s.9 2 2 2 2-.9 2-2-.9-2-2-2z"/></svg></div><div class="row" style="top:761px;height:54px"><div class="cb" style="top:18.00px"></div><div class="av" style="top:10.00px">M</div><div class="nm" style="top:19.20px;font-size:14px;letter-spacing:0.1px">@vendor.invitation</div><div class="stb" style="top:17.00px">ACTIVE</div><svg class="w2" style="top:14.00px" viewBox="0 0 24 24"><path fill="#c9a227" d="M1 21h22L12 2 1 21zm12-3h-2v-2h2v2zm0-4h-2v-4h2v4z"/></svg><div class="txt" style="left:927px;top:18.30px">4 years ago</div><div class="txt" style="left:1176px;top:18.30px">4 years ago</div><svg class="mv" style="top:15.00px" viewBox="0 0 24 24"><path d="M12 8c1.1 0 2-.9 2-2s-.9-2-2-2-2 .9-2 2 .9 2 2 2zm0 2c-1.1 0-2 .9-2 2s.9 2 2 2 2-.9 2-2-.9-2-2-2zm0 6c-1.1 0-2 .9-2 2s.9 2 2 2 2-.9 2-2-.9-2-2-2z"/></svg></div><div class="sep" style="top:226px;background:#e6e6e6"></div><div class="sep" style="top:279px;background:#dfe6dd"></div><div class="sep" style="top:333px;background:#dbe7da"></div><div class="sep" style="top:387px;background:#dfe7dd"></div><div class="sep" style="top:441px;background:#e6e6e6"></div><div class="sep" style="top:494px;background:#e6e6e6"></div><div class="sep" style="top:548px;background:#e6e6e6"></div><div class="sep" style="top:602px;background:#e6e6e6"></div><div class="sep" style="top:655px;background:#e6e6e6"></div><div class="sep" style="top:708px;background:#e6e6e6"></div><div class="sep" style="top:761px;background:#e6e6e6"></div><div class="sep" style="top:814px;background:#e6e6e6"></div>
</div>
<div id="fab">
  <svg class="abs" style="left:12px;top:12px" width="24" height="24" viewBox="0 0 24 24"><path fill="#fff" d="M19 13h-6v6h-2v-6H5v-2h6V5h2v6h6v2z"/></svg>
  <div class="abs" style="left:47px;top:16.5px;font-size:14px;color:#fff;line-height:16px;-webkit-text-stroke:0.35px #fff;letter-spacing:0px;white-space:nowrap;transform:scaleX(0.93);transform-origin:0 0">INVITE USERS</div>
</div>
<div id="sb"><i></i></div>
</body></html>
